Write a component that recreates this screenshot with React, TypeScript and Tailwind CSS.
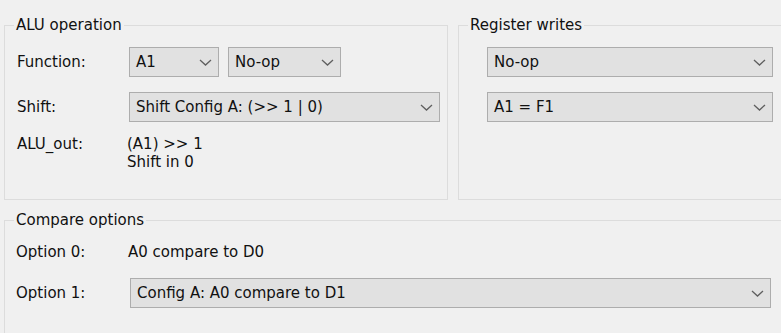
import React from "react";

const Chevron = () => (
  <svg width="13" height="7" viewBox="0 0 13 7" className="shrink-0">
    <polyline
      points="1,1 6.5,6 12,1"
      fill="none"
      stroke="#5f5f5f"
      strokeWidth="1.3"
    />
  </svg>
);

const Combo = ({ value, className }: { value: string; className: string }) => (
  <div
    className={`h-[30px] flex items-center justify-between border border-[#adadad] bg-[#e1e1e1] pl-[6px] pr-[6px] ${className}`}
  >
    <span className="whitespace-nowrap">{value}</span>
    <Chevron />
  </div>
);

const Group = ({
  title,
  className,
  children,
}: {
  title: string;
  className: string;
  children: React.ReactNode;
}) => (
  <fieldset className={`border border-[#dcdcdc] m-0 p-0 min-w-0 ${className}`}>
    <legend className="ml-[9px] px-[2px] leading-[16px]">{title}</legend>
    {children}
  </fieldset>
);

export default function App() {
  return (
    <div
      className="w-[781px] h-[333px] overflow-hidden bg-[#f0f0f0] text-[#111] text-[15px] leading-[16px] pt-[17px] pl-[4px]"
      style={{ fontFamily: '"DejaVu Sans", "Noto Sans CJK JP", sans-serif' }}
    >
      <div className="flex gap-[10px] w-[800px]">
        {/* ALU operation */}
        <Group title="ALU operation" className="w-[444px] h-[183px] shrink-0">
          <div className="pl-[12px] pt-[14px] flex flex-col">
            <div className="flex items-center h-[30px]">
              <span className="w-[112px]">Function:</span>
              <Combo value="A1" className="w-[90px]" />
              <Combo value="No-op" className="w-[113px] ml-[9px]" />
            </div>
            <div className="flex items-center h-[30px] mt-[15px]">
              <span className="w-[112px]">Shift:</span>
              <Combo value="Shift Config A: (>> 1 | 0)" className="w-[311px]" />
            </div>
            <div className="flex mt-[13px] leading-[18px]">
              <span className="w-[110px]">ALU_out:</span>
              <div className="flex flex-col">
                <span>(A1) &gt;&gt; 1</span>
                <span>Shift in 0</span>
              </div>
            </div>
          </div>
        </Group>

        {/* Register writes */}
        <Group title="Register writes" className="w-[340px] h-[183px] shrink-0">
          <div className="pl-[28px] pt-[14px] flex flex-col gap-[15px]">
            <Combo value="No-op" className="w-[286px]" />
            <Combo value="A1 = F1" className="w-[286px]" />
          </div>
        </Group>
      </div>

      {/* Compare options */}
      <Group title="Compare options" className="w-[800px] h-[140px] mt-[12px]">
        <div className="pl-[11px] pt-[16px] flex flex-col">
          <div className="flex items-center h-[16px]">
            <span className="w-[112px]">Option 0:</span>
            <span>A0 compare to D0</span>
          </div>
          <div className="flex items-center h-[30px] mt-[18px]">
            <span className="w-[114px]">Option 1:</span>
            <Combo value="Config A: A0 compare to D1" className="w-[641px]" />
          </div>
        </div>
      </Group>
    </div>
  );
}
